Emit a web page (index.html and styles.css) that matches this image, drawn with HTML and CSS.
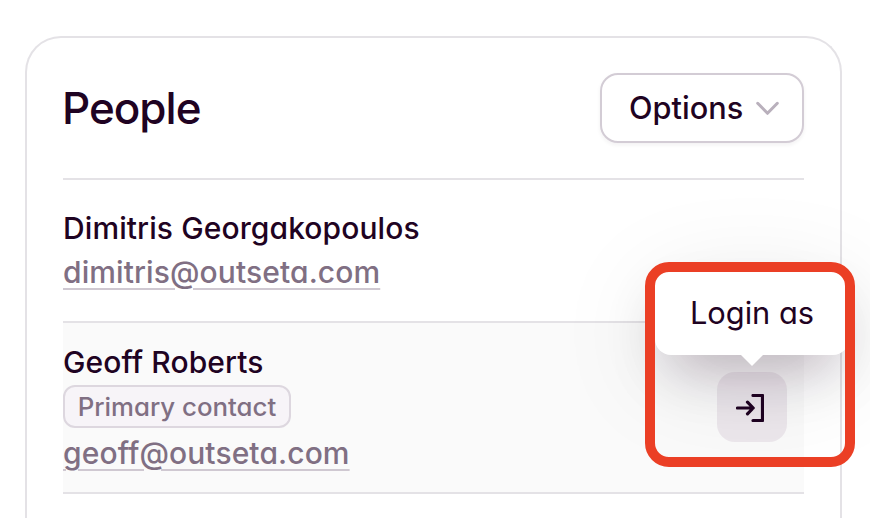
FILE: index.html
```html
<!DOCTYPE html>
<html lang="en">
<head>
    <meta charset="UTF-8">
    <meta name="viewport" content="width=device-width, initial-scale=1.0">
    <title>People</title>
    <link rel="stylesheet" href="styles.css">
</head>
<body>

<div class="card">
    <div class="card-header">
        <h1>People</h1>
        <button class="options">
            <span>Options</span>
            <svg class="chevron" width="23" height="14" viewBox="0 0 23 14">
                <path d="M1.7 2.3 L11.5 12.3 L21.3 2.3"/>
            </svg>
        </button>
    </div>

    <div class="person">
        <div class="info">
            <div class="name">Dimitris Georgakopoulos</div>
            <a class="email">dimitris@outseta.com</a>
        </div>
    </div>

    <div class="person active">
        <div class="info">
            <div class="name">Geoff Roberts</div>
            <div class="badge">Primary contact</div>
            <a class="email">geoff@outseta.com</a>
        </div>
        <div class="login">
            <svg class="login-icon" width="28" height="28" viewBox="0 0 28 28">
                <path d="M17 1.5 H26.5 V26.5 H17"/>
                <path d="M1.5 14 H17 M11.5 8.2 L17.2 14 L11.5 19.8"/>
            </svg>
            <div class="tooltip">Login as</div>
            <div class="highlight"></div>
        </div>
    </div>
</div>

</body>
</html>
```

FILE: styles.css
```css
* {
    box-sizing: border-box;
}
body {
    margin: 0;
    height: 518px;
    overflow: hidden;
    background-color: #fff;
    color: #1f0322;
    font-family: Inter, sans-serif;
    font-feature-settings: "cv11";
}
.card {
    width: 817px;
    height: 482px;
    margin: 36px 0 0 25px;
    padding: 0 36px;
    border: 2px solid #e4e2e6;
    border-bottom: 0;
    border-radius: 36px 36px 0 0;
}
.card-header {
    display: flex;
    align-items: center;
    justify-content: space-between;
    height: 142px;
    border-bottom: 2px solid #e4e2e6;
}
h1 {
    margin: 0 0 0 -1px;
    font-size: 44px;
    font-weight: 500;
    letter-spacing: -1px;
}
.options {
    display: flex;
    align-items: center;
    justify-content: space-between;
    width: 204px;
    height: 70px;
    padding: 0 23px 0 27px;
    border: 2px solid #d3ccd5;
    border-radius: 18px;
    background-color: #fff;
    box-shadow: 0 2px 4px rgba(31, 3, 34, 0.06);
    color: inherit;
    font: inherit;
    font-size: 30.7px;
    font-weight: 500;
}
.options span {
    margin-top: -1px;
}
.chevron {
    fill: none;
    stroke: #b9b0bc;
    stroke-width: 3;
    stroke-linecap: round;
    stroke-linejoin: round;
}
.person {
    display: flex;
    align-items: center;
    justify-content: space-between;
    height: 143px;
    padding-bottom: 2px;
    border-bottom: 2px solid #e4e2e6;
}
.person.active {
    height: 171px;
    padding: 0 17px 0 0;
    background-color: #fafafa;
}
.name,
.email {
    display: block;
    font-size: 30px;
    font-weight: 500;
    letter-spacing: 0.1px;
    line-height: 44px;
}
.email {
    color: #806f83;
    text-decoration: underline;
    text-decoration-color: #cfc8d1;
    text-decoration-thickness: 2px;
    text-underline-offset: 5px;
}
.badge {
    width: 228px;
    height: 43px;
    margin: 1px 0 3px;
    border: 2px solid #ddd7df;
    border-radius: 12px;
    background-color: #f7f4f8;
    color: #806f83;
    font-size: 25.8px;
    font-weight: 500;
    line-height: 40px;
    text-align: center;
}
.login {
    position: relative;
    display: flex;
    align-items: center;
    justify-content: center;
    width: 70px;
    height: 70px;
    margin-bottom: 2px;
    padding: 2px 4px 0 0;
    border-radius: 18px;
    background-color: #ece7ec;
}
.login-icon {
    fill: none;
    stroke: #1f0322;
    stroke-width: 3.2;
    stroke-linecap: round;
    stroke-linejoin: round;
}
.tooltip {
    position: absolute;
    bottom: 87px;
    left: -62px;
    width: 194px;
    height: 84px;
    border-radius: 16px;
    background-color: #fff;
    box-shadow: 0 20px 110px rgba(31, 3, 34, 0.11), 0 24px 56px -14px rgba(31, 3, 34, 0.28);
    font-size: 30.8px;
    line-height: 83px;
    text-align: center;
}
.tooltip::after {
    content: "";
    position: absolute;
    top: 84px;
    left: 86px;
    border: 11px solid transparent;
    border-top-color: #fff;
    border-bottom: 0;
}
/* red frame around the tooltip and the button */
.highlight {
    position: absolute;
    top: -110px;
    left: -72px;
    width: 210px;
    height: 205px;
    border: 10px solid #eb3f25;
    border-radius: 24px;
}
```
